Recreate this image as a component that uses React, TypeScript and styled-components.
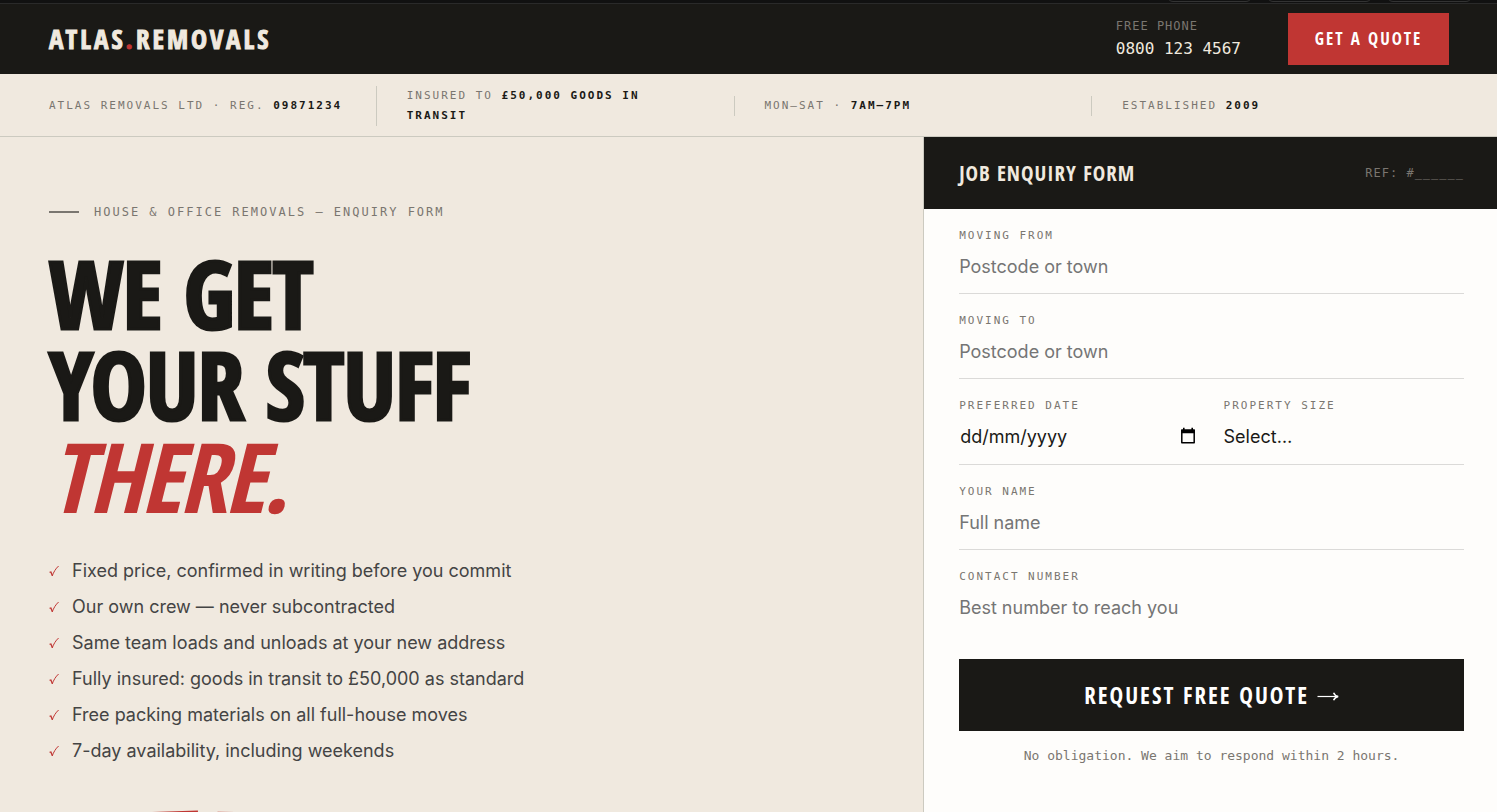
import React from 'react';
import styled, { createGlobalStyle } from 'styled-components';

const ink = '#1a1916';
const cream = '#f0e9df';
const red = '#c03633';
const grey = '#7a7670';
const rule = '#cccac0';

const display = '"Open Sans Condensed", "Roboto Condensed", sans-serif';
const mono = '"DejaVu Sans Mono", monospace';
const sans = 'Inter, sans-serif';

const GlobalStyle = createGlobalStyle`
  html { scrollbar-width: none; }
  body { margin: 0; background: ${cream}; color: ${ink}; font-family: ${sans}; }
  *, *::before, *::after { box-sizing: border-box; }
`;

const Page = styled.div`
  display: flex;
  flex-direction: column;
  height: 100vh;
  overflow: hidden;
`;

const TopStrip = styled.div`
  display: flex;
  flex: none;
  justify-content: flex-end;
  align-items: flex-end;
  gap: 15px;
  height: 4px;
  padding: 0 25px 1px;
  overflow: hidden;
  background: #111111;
  border-bottom: 1px solid #2a2a2a;
`;

const Pill = styled.span<{ $width: number }>`
  flex: none;
  width: ${(p) => p.$width}px;
  height: 24px;
  border: 1px solid #333333;
  border-radius: 6px;
`;

const Header = styled.header`
  display: flex;
  flex: none;
  align-items: center;
  height: 70px;
  padding: 0 48px 0 49px;
  background: ${ink};
`;

const Logo = styled.a`
  margin-right: auto;
  color: ${cream};
  font: 700 27px/32px ${display};
  letter-spacing: 3px;
  text-decoration: none;
  -webkit-text-stroke: 1px ${cream};
  span { color: ${red}; -webkit-text-stroke-color: ${red}; }
`;

const Phone = styled.div`
  display: flex;
  flex-direction: column;
  gap: 3px;
  margin-right: 47px;
  font-family: ${mono};
`;

const PhoneLabel = styled.span`
  color: ${grey};
  font-size: 12px;
  line-height: 16px;
  letter-spacing: 1px;
`;

const PhoneNumber = styled.a`
  color: ${cream};
  font-size: 16px;
  line-height: 24px;
  text-decoration: none;
`;

const QuoteButton = styled.button`
  min-width: 161px;
  height: 52px;
  padding: 0 24px;
  border: 0;
  background: ${red};
  color: #ffffff;
  font: 700 17px/24px ${display};
  letter-spacing: 2px;
`;

const TrustBar = styled.div`
  display: flex;
  flex: none;
  align-items: center;
  padding: 12px 48px 10px 49px;
  border-bottom: 1px solid ${rule};
`;

const TrustItem = styled.div`
  flex: 1 1 0;
  padding: 0 30px;
  border-left: 1px solid ${rule};
  color: ${grey};
  font: 400 11px/20px ${mono};
  letter-spacing: 2px;
  &:first-child { padding-left: 0; border-left: 0; }
  strong { color: ${ink}; font-weight: 700; }
`;

const Main = styled.main`
  display: grid;
  flex: 1;
  grid-template-columns: minmax(0, 37fr) minmax(0, 23fr);
`;

const Hero = styled.section`
  padding: 64px 48px 0 49px;
`;

const Eyebrow = styled.p`
  display: flex;
  align-items: center;
  gap: 15px;
  margin: 0;
  color: ${grey};
  font: 400 12px/22px ${mono};
  letter-spacing: 2px;
  &::before { content: ''; width: 30px; height: 2px; background: ${grey}; }
`;

const Title = styled.h1`
  margin: 25px 0 0;
  font: 700 94px/91px ${display};
  letter-spacing: -1px;
  span { display: block; -webkit-text-stroke: 3px ${ink}; }
  em {
    display: block;
    color: ${red};
    font-size: 97px;
    font-style: italic;
    letter-spacing: -3px;
  }
`;

const Points = styled.ul`
  display: flex;
  flex-direction: column;
  gap: 10px;
  margin: 37px 0 0;
  padding: 0;
  list-style: none;
`;

const Point = styled.li`
  display: flex;
  align-items: center;
  gap: 13px;
  color: #444444;
  font-size: 18px;
  line-height: 26px;
`;

const Stamps = styled.div`
  display: flex;
  gap: 18px;
  margin-top: 49px;
`;

const Stamp = styled.div<{ $tilt: number }>`
  width: 150px;
  height: 60px;
  border: 3px solid ${red};
  transform: rotate(${(p) => p.$tilt}deg);
`;

const Panel = styled.section`
  border-left: 1px solid ${rule};
  background: #fefdfb;
`;

const PanelHead = styled.div`
  display: flex;
  align-items: center;
  justify-content: space-between;
  height: 72px;
  padding: 0 33px 0 35px;
  background: ${ink};
`;

const PanelTitle = styled.h2`
  margin: 0;
  color: ${cream};
  font: 700 21px/28px ${display};
  letter-spacing: 1px;
`;

const Ref = styled.span`
  color: ${grey};
  font: 400 12px/16px ${mono};
  letter-spacing: 1px;
`;

const Form = styled.form`
  padding: 0 33px 0 35px;
`;

const Row = styled.div<{ $last?: boolean }>`
  display: grid;
  grid-auto-flow: column;
  grid-auto-columns: minmax(0, 1fr);
  gap: 24px;
  padding: 18px 0 12px;
  border-bottom: ${(p) => (p.$last ? '0' : '1px solid #dbdad8')};
`;

const Field = styled.div`
  display: flex;
  flex-direction: column;
  gap: 8px;
`;

const Label = styled.label`
  color: ${grey};
  font: 400 11px/18px ${mono};
  letter-spacing: 2px;
`;

const controlText = `
  width: 100%;
  height: 28px;
  padding: 0;
  border: 0;
  outline: 0;
  background: transparent;
  color: ${ink};
  font: 400 18px/28px ${sans};
`;

const Input = styled.input`
  ${controlText}
  &::placeholder { color: #757575; opacity: 1; }
`;

const Select = styled.select`
  ${controlText}
  appearance: none;
`;

const DateBox = styled.div`
  display: flex;
  align-items: flex-start;
  height: 29px;
  padding: 0 4px 0 1px;
  ${Input}::placeholder { color: ${ink}; }
`;

const CalendarButton = styled.button`
  display: flex;
  align-items: center;
  height: 26px;
  padding: 0;
  border: 0;
  background: transparent;
  color: #000000;
`;

const Submit = styled.button`
  display: flex;
  align-items: center;
  justify-content: center;
  gap: 8px;
  width: 100%;
  height: 72px;
  margin-top: 25px;
  border: 0;
  background: ${ink};
  color: #ffffff;
  font: 700 23px/32px ${display};
  letter-spacing: 2px;
`;

const Note = styled.p`
  margin: 16px 0 0;
  color: ${grey};
  font: 400 13px/18px ${mono};
  text-align: center;
`;

const Tick = () => (
  <svg width="10" height="12" viewBox="0 0 10 12" fill="none" stroke={red} aria-hidden="true">
    <path d="M0.6 7.4 1.9 7 3.4 10.8" strokeWidth="1.3" />
    <path d="M3.2 11 C4.6 7.2 6.6 3.6 9.6 1" strokeWidth="1" />
  </svg>
);

const Calendar = () => (
  <svg width="16" height="18" viewBox="0 0 16 18" fill="none" aria-hidden="true">
    <path d="M1.8 3.2h12.4v12.6H1.8z" stroke="currentColor" strokeWidth="1.5" strokeLinejoin="round" />
    <path d="M1.2 2.6h13.6v3.6H1.2zM3 0.8h1.6v2.4H3zM11.400 0.8h1.6v2.4h-1.6z" fill="currentColor" />
  </svg>
);

const Arrow = () => (
  <svg width="22" height="12" viewBox="0 0 22 12" fill="none" stroke="currentColor" aria-hidden="true">
    <path d="M0.5 7.500h20.500" strokeWidth="1.2" />
    <path d="M16.600 3.700c.8 2.100 2.200 3.300 4.600 3.800-2.400.5-3.800 1.700-4.600 3.800" strokeWidth="1.5" />
  </svg>
);

const points = [
  'Fixed price, confirmed in writing before you commit',
  'Our own crew — never subcontracted',
  'Same team loads and unloads at your new address',
  'Fully insured: goods in transit to £50,000 as standard',
  'Free packing materials on all full-house moves',
  '7-day availability, including weekends',
];

interface TextFieldProps {
  id: string;
  label: string;
  placeholder: string;
  type?: string;
}

const TextField = ({ id, label, placeholder, type = 'text' }: TextFieldProps) => (
  <Field>
    <Label htmlFor={id}>{label}</Label>
    <Input id={id} type={type} placeholder={placeholder} />
  </Field>
);

export default function App() {
  return (
    <>
      <GlobalStyle />
      <Page>
        <TopStrip>
          <Pill $width={85} />
          <Pill $width={105} />
          <Pill $width={85} />
        </TopStrip>
        <Header>
          <Logo href="#">ATLAS<span>.</span>REMOVALS</Logo>
          <Phone>
            <PhoneLabel>FREE PHONE</PhoneLabel>
            <PhoneNumber href="tel:08001234567">0800 123 4567</PhoneNumber>
          </Phone>
          <QuoteButton type="button">GET A QUOTE</QuoteButton>
        </Header>
        <TrustBar>
          <TrustItem>ATLAS REMOVALS LTD · REG. <strong>09871234</strong></TrustItem>
          <TrustItem>INSURED TO <strong>£50,000 GOODS IN TRANSIT</strong></TrustItem>
          <TrustItem>MON–SAT · <strong>7AM–7PM</strong></TrustItem>
          <TrustItem>ESTABLISHED <strong>2009</strong></TrustItem>
        </TrustBar>
        <Main>
          <Hero>
            <Eyebrow>HOUSE &amp; OFFICE REMOVALS — ENQUIRY FORM</Eyebrow>
            <Title>
              <span>WE GET</span>
              <span>YOUR STUFF</span>
              <em>THERE.</em>
            </Title>
            <Points>
              {points.map((text) => (
                <Point key={text}><Tick />{text}</Point>
              ))}
            </Points>
            <Stamps aria-hidden="true">
              <Stamp $tilt={-2} />
              <Stamp $tilt={1} />
            </Stamps>
          </Hero>
          <Panel>
            <PanelHead>
              <PanelTitle>JOB ENQUIRY FORM</PanelTitle>
              <Ref>REF: #______</Ref>
            </PanelHead>
            <Form>
              <Row><TextField id="from" label="MOVING FROM" placeholder="Postcode or town" /></Row>
              <Row><TextField id="to" label="MOVING TO" placeholder="Postcode or town" /></Row>
              <Row>
                <Field>
                  <Label htmlFor="date">PREFERRED DATE</Label>
                  <DateBox>
                    <Input id="date" type="text" placeholder="dd/mm/yyyy" />
                    <CalendarButton type="button" aria-label="Choose date"><Calendar /></CalendarButton>
                  </DateBox>
                </Field>
                <Field>
                  <Label htmlFor="size">PROPERTY SIZE</Label>
                  <Select id="size"><option>Select…</option></Select>
                </Field>
              </Row>
              <Row><TextField id="name" label="YOUR NAME" placeholder="Full name" /></Row>
              <Row $last><TextField id="phone" label="CONTACT NUMBER" placeholder="Best number to reach you" type="tel" /></Row>
              <Submit type="button">REQUEST FREE QUOTE <Arrow /></Submit>
              <Note>No obligation. We aim to respond within 2 hours.</Note>
            </Form>
          </Panel>
        </Main>
      </Page>
    </>
  );
}
